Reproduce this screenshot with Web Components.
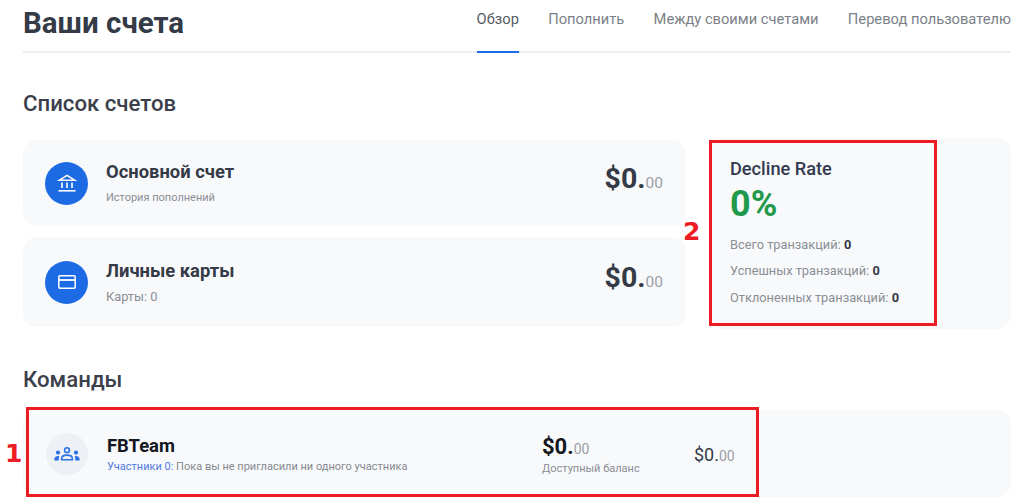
<!DOCTYPE html>
<html lang="ru">
<head>
<meta charset="utf-8">
<title>Ваши счета</title>
<style>
	html, body { margin: 0; padding: 0; background: #fff; }
	body { width: 1024px; height: 504px; overflow: hidden; font-family: Roboto, "Liberation Sans", sans-serif; color: #343a46; }
</style>
</head>
<body>
<template id="page-header-tpl">
	<style>
		:host { display: flex; justify-content: space-between; height: 53px; box-sizing: border-box; border-bottom: 2px solid #eceef0; }
		h1 { margin: 0; padding-top: 5px; font-size: 29.5px; line-height: 36px; font-weight: 700; color: #343a46; }
		nav { display: flex; gap: 29.3px; font-size: 14.7px; line-height: 20px; color: #7b7f87; white-space: nowrap; }
		nav span { display: block; height: 53px; box-sizing: border-box; padding-top: 9px; }
		nav span.on { color: #565b64; border-bottom: 2px solid #1d6ae5; }
	</style>
	<h1><slot></slot></h1>
	<nav>
		<span class="on">Обзор</span>
		<span>Пополнить</span>
		<span>Между своими счетами</span>
		<span>Перевод пользователю</span>
	</nav>
</template>

<template id="section-title-tpl">
	<style>
		:host { display: block; font-size: 22.2px; line-height: 28px; font-weight: 500; color: #3b404b; }
	</style>
	<slot></slot>
</template>

<template id="account-card-tpl">
	<style>
		:host { display: flex; align-items: center; box-sizing: border-box; padding: 0 23px 0 22px; background: #f8f9fb; border-radius: 14px; }
		.ic { width: 43px; height: 43px; border-radius: 50%; background: #1d6ae5; display: flex; align-items: center; justify-content: center; flex: none; margin-right: 18px; }
		.txt { flex: 1; }
		.name { font-size: 18.4px; line-height: 24px; font-weight: 700; color: #343a46; }
		.sub { font-size: 11px; line-height: 16px; color: #8a8e95; margin-top: 6px; }
		.sum { font-size: 28.5px; line-height: 36px; font-weight: 700; color: #343a46; padding-bottom: 4px; }
		.sum small { font-size: 15.5px; font-weight: 400; color: #9a9ea5; }
	</style>
	<div class="ic"><slot name="icon"></slot></div>
	<div class="txt">
		<div class="name"><slot name="name"></slot></div>
		<div class="sub"><slot name="sub"></slot></div>
	</div>
	<div class="sum">$0.<small>00</small></div>
</template>

<template id="decline-panel-tpl">
	<style>
		:host { display: block; box-sizing: border-box; background: #f8f9fb; border-radius: 14px; padding: 19px 20px 0 20px; }
		.t { font-size: 18.2px; line-height: 24px; font-weight: 500; color: #343a50; margin-bottom: 1px; }
		.v { font-size: 36px; line-height: 44px; font-weight: 700; color: #1f9a4d; margin-bottom: 9px; }
		.r { font-size: 12.8px; line-height: 16px; color: #8a8e95; margin-top: 10.5px; }
		b { font-weight: 700; color: #343a46; }
	</style>
	<div class="t">Decline Rate</div>
	<div class="v">0%</div>
	<div class="r">Всего транзакций: <b>0</b></div>
	<div class="r">Успешных транзакций: <b>0</b></div>
	<div class="r">Отклоненных транзакций: <b>0</b></div>
</template>

<template id="team-row-tpl">
	<style>
		:host { display: flex; align-items: center; height: 87px; box-sizing: border-box; padding-left: 23px; background: #f8f9fb; border-radius: 14px; }
		.ic { width: 42px; height: 42px; border-radius: 50%; background: #edf0f5; display: flex; align-items: center; justify-content: center; flex: none; margin-right: 19px; }
		.txt { width: 435px; flex: none; padding-top: 2px; }
		.name { font-size: 18.4px; line-height: 22px; font-weight: 700; color: #15181e; }
		.sub { font-size: 11px; line-height: 14px; color: #85898f; margin-top: 3px; white-space: nowrap; }
		.sub em { font-style: normal; color: #4f7be0; }
		.bal { width: 152px; flex: none; padding-top: 3px; }
		.sum { font-size: 22px; line-height: 26px; font-weight: 700; color: #15181e; }
		.sum small { font-size: 14px; font-weight: 400; color: #9a9ea5; }
		.lbl { font-size: 11px; line-height: 14px; color: #8a8e95; }
		.total { font-size: 18px; line-height: 24px; color: #343a46; padding-top: 4px; }
		.total small { font-size: 14px; color: #9a9ea5; }
	</style>
	<div class="ic">
		<svg width="26" height="14" viewBox="0 0 26 14" fill="#2f72e6">
			<circle cx="13" cy="3.2" r="2.4" fill="none" stroke="#2f72e6" stroke-width="1.6"/>
			<path d="M7.6 12.8v-1.1c0-2.3 2.5-3.6 5.4-3.6s5.4 1.3 5.4 3.6v1.1z" fill="none" stroke="#2f72e6" stroke-width="1.6"/>
			<circle cx="4" cy="5.6" r="2.1"/>
			<circle cx="22" cy="5.6" r="2.1"/>
			<path d="M0.4 13.4v-1.6c0-1.8 1.7-2.9 3.8-2.9.5 0 .9 0 1.2.1-.4.6-.6 1.2-.6 1.9v2.5zM25.6 13.4v-1.6c0-1.8-1.7-2.9-3.8-2.9-.5 0-.9 0-1.2.1.4.6.6 1.2.6 1.9v2.5z"/>
		</svg>
	</div>
	<div class="txt">
		<div class="name"><slot name="name"></slot></div>
		<div class="sub"><em>Участники 0:</em> Пока вы не пригласили ни одного участника</div>
	</div>
	<div class="bal">
		<div class="sum">$0.<small>00</small></div>
		<div class="lbl">Доступный баланс</div>
	</div>
	<div class="total">$0.<small>00</small></div>
</template>

<template id="mark-box-tpl">
	<style>
		:host { position: absolute; box-sizing: border-box; border: 3px solid #ed1c24; pointer-events: none; }
		span { position: absolute; font: 700 25px/32px "DejaVu Sans", "Liberation Sans", sans-serif; color: #ed1c24; }
	</style>
	<span><slot></slot></span>
</template>

<template id="accounts-page-tpl">
	<style>
		:host { display: block; position: relative; width: 1024px; height: 504px; box-sizing: border-box; padding: 0 13px 0 23px; }
		.head { display: block; }
		.sec1 { margin-top: 36px; }
		.cols { display: grid; grid-template-columns: 663px 301px; column-gap: 24px; margin-top: 21px; }
		.cards { display: grid; grid-template-rows: 86px 90px; row-gap: 11px; padding: 2px 0; }
		.sec2 { margin-top: 36px; }
		.team { margin-top: 17px; }
	</style>
	<div class="head"><slot name="head"></slot></div>
	<div class="sec1"><slot name="sec1"></slot></div>
	<div class="cols">
		<div class="cards"><slot name="cards"></slot></div>
		<slot name="decline"></slot>
	</div>
	<div class="sec2"><slot name="sec2"></slot></div>
	<div class="team"><slot name="team"></slot></div>
	<slot name="marks"></slot>
</template>

<accounts-page>
	<page-header slot="head">Ваши счета</page-header>
	<section-title slot="sec1">Список счетов</section-title>
	<account-card slot="cards">
		<svg slot="icon" width="20" height="20" viewBox="0 0 20 20" fill="none" stroke="#fff" stroke-width="1.6">
			<path d="M2.5 7.2 10 2.4l7.500 4.800z"/>
			<path d="M5 9.500v5.500M10 9.500v5.500M15 9.500v5.500"/>
			<path d="M1.500 17.800h17"/>
		</svg>
		<span slot="name">Основной счет</span>
		<span slot="sub">История пополнений</span>
	</account-card>
	<account-card slot="cards">
		<svg slot="icon" width="18" height="14" viewBox="0 0 18 14" fill="none" stroke="#fff" stroke-width="1.5">
			<rect x="0.800" y="0.800" width="16.400" height="12.400" rx="1.200"/>
			<path d="M1 5h16" stroke-width="1.800"/>
		</svg>
		<span slot="name">Личные карты</span>
		<span slot="sub" style="font-size:12.8px">Карты: 0</span>
	</account-card>
	<decline-panel slot="decline"></decline-panel>
	<section-title slot="sec2">Команды</section-title>
	<team-row slot="team"><span slot="name">FBTeam</span></team-row>
	<mark-box slot="marks" style="left:709px;top:140px;width:228px;height:186px" data-x="-29" data-y="73">2</mark-box>
	<mark-box slot="marks" style="left:26px;top:407px;width:733px;height:90px" data-x="-24" data-y="28">1</mark-box>
</accounts-page>

<script>
	// Simple helper, every element here is just a template stamped into an open shadow root
	function stamp(elem, id) {
		const shadow = elem.attachShadow({mode: 'open'});
		shadow.appendChild(document.getElementById(id).content.cloneNode(true));
		return shadow;
	}

	class AccountsPage extends HTMLElement {
		constructor() { super(); stamp(this, 'accounts-page-tpl'); }
	}
	class PageHeader extends HTMLElement {
		constructor() { super(); stamp(this, 'page-header-tpl'); }
	}
	class SectionTitle extends HTMLElement {
		constructor() { super(); stamp(this, 'section-title-tpl'); }
	}
	class AccountCard extends HTMLElement {
		constructor() { super(); stamp(this, 'account-card-tpl'); }
	}
	class DeclinePanel extends HTMLElement {
		constructor() { super(); stamp(this, 'decline-panel-tpl'); }
	}
	class TeamRow extends HTMLElement {
		constructor() { super(); stamp(this, 'team-row-tpl'); }
	}
	class MarkBox extends HTMLElement {
		constructor() { super(); this._shadow = stamp(this, 'mark-box-tpl'); }

		connectedCallback() {
			const label = this._shadow.querySelector('span');
			label.style.left = this.getAttribute('data-x') + 'px';
			label.style.top = this.getAttribute('data-y') + 'px';
		}
	}

	customElements.define('accounts-page', AccountsPage);
	customElements.define('page-header', PageHeader);
	customElements.define('section-title', SectionTitle);
	customElements.define('account-card', AccountCard);
	customElements.define('decline-panel', DeclinePanel);
	customElements.define('team-row', TeamRow);
	customElements.define('mark-box', MarkBox);
</script>
</body>
</html>
